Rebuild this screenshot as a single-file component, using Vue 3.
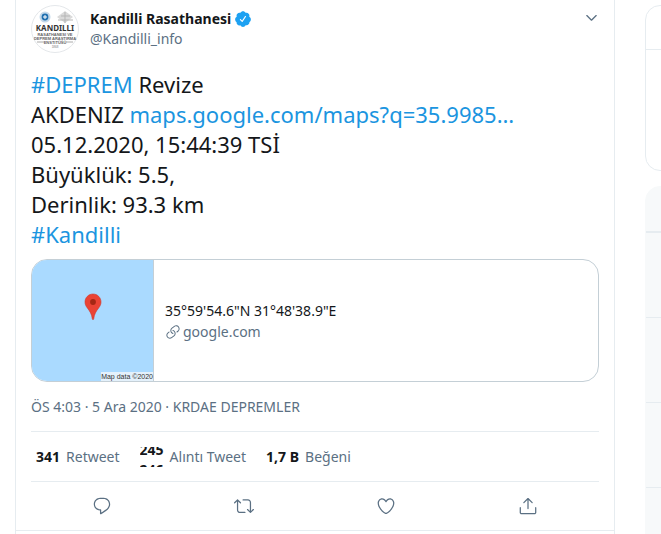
<script setup>
const lines = [
  [{ text: '#DEPREM', link: true }, { text: ' Revize' }],
  [{ text: 'AKDENIZ ' }, { text: 'maps.google.com/maps?q=35.9985…', link: true }],
  [{ text: '05.12.2020, 15:44:39 TSİ' }],
  [{ text: 'Büyüklük: 5.5,' }],
  [{ text: 'Derinlik: 93.3 km' }],
  [{ text: '#Kandilli', link: true }]
]

const actions = [
  {
    label: 'Yanıtla',
    paths: ['M14.046 2.242l-4.148-.01h-.002c-4.374 0-7.8 3.427-7.8 7.802 0 4.098 3.186 7.206 7.465 7.37v3.828c0 .108.044.286.12.403.142.225.384.347.632.347.138 0 .277-.038.402-.118.264-.168 6.473-4.14 8.088-5.506 1.902-1.61 3.04-3.97 3.043-6.312v-.017c-.006-4.367-3.43-7.787-7.8-7.788zm3.787 12.972c-1.134.96-4.862 3.405-6.772 4.643V16.67c0-.414-.335-.75-.75-.75h-.396c-3.66 0-6.318-2.476-6.318-5.886 0-3.534 2.768-6.302 6.3-6.302l4.147.01h.002c3.532 0 6.3 2.766 6.302 6.296-.003 1.91-.942 3.844-2.514 5.176z']
  },
  {
    label: 'Retweetle',
    paths: ['M23.77 15.67c-.292-.293-.767-.293-1.06 0l-2.22 2.22V7.65c0-2.068-1.683-3.75-3.75-3.75h-5.85c-.414 0-.75.336-.75.75s.336.75.75.75h5.85c1.24 0 2.25 1.01 2.25 2.25v10.24l-2.22-2.22c-.293-.293-.768-.293-1.06 0s-.294.768 0 1.06l3.5 3.5c.145.147.337.22.53.22s.383-.072.53-.22l3.5-3.5c.294-.292.294-.767 0-1.06zm-10.66 3.28H7.26c-1.24 0-2.25-1.01-2.25-2.25V6.46l2.22 2.22c.148.147.34.22.532.22s.384-.073.53-.22c.293-.293.293-.768 0-1.06l-3.5-3.5c-.293-.294-.768-.294-1.06 0l-3.5 3.5c-.294.292-.294.767 0 1.06s.767.293 1.06 0l2.22-2.22V16.7c0 2.068 1.683 3.75 3.75 3.75h5.85c.414 0 .75-.336.75-.75s-.337-.75-.75-.75z']
  },
  {
    label: 'Beğen',
    paths: ['M12 21.638h-.014C9.403 21.59 1.95 14.856 1.95 8.478c0-3.064 2.525-5.754 5.403-5.754 2.29 0 3.83 1.58 4.646 2.73.814-1.148 2.354-2.73 4.645-2.73 2.88 0 5.404 2.69 5.404 5.755 0 6.376-7.454 13.11-10.037 13.157H12zM7.354 4.225c-2.08 0-3.903 1.988-3.903 4.255 0 5.74 7.034 11.596 8.55 11.658 1.518-.062 8.55-5.917 8.55-11.658 0-2.267-1.823-4.255-3.903-4.255-2.528 0-3.94 2.936-3.952 2.965-.23.562-1.156.562-1.387 0-.014-.03-1.425-2.965-3.954-2.965z']
  },
  {
    label: 'Paylaş',
    paths: [
      'M17.53 7.47l-5-5c-.293-.293-.768-.293-1.06 0l-5 5c-.294.293-.294.768 0 1.06s.767.294 1.06 0l3.72-3.72V15c0 .414.336.75.75.75s.75-.336.75-.75V4.81l3.72 3.72c.146.147.338.22.53.22s.384-.072.53-.22c.293-.293.293-.767 0-1.06z',
      'M19.708 21.944H4.292C3.028 21.944 2 20.916 2 19.652V14c0-.414.336-.75.75-.75s.75.336.75.75v5.652c0 .437.355.792.792.792h15.416c.437 0 .792-.355.792-.792V14c0-.414.336-.75.75-.75s.75.336.75.75v5.652c0 1.264-1.028 2.292-2.292 2.292z'
    ]
  }
]
</script>

<template>
  <div class="page">
    <main class="column">
      <article class="tweet">
        <header class="author">
          <svg class="avatar" viewBox="0 0 48 48" role="img" aria-label="Kandilli Rasathanesi">
            <circle cx="24" cy="24" r="23.5" fill="#fff" stroke="#e4e7ea" />
            <circle cx="14" cy="12" r="5.500" fill="#c3d8ea" />
            <circle cx="14" cy="12" r="3.4" fill="#1f6fb0" />
            <path d="M14 10v4M12 12h4" stroke="#fff" stroke-width="1" />
            <path d="M34 6l8 6-8 6-8-6z" fill="#dadada" />
            <path d="M27 15h15M30 11h9M34 7v11" stroke="#b5b5b5" stroke-width="1" />
            <text class="logo-name" x="24" y="26" text-anchor="middle">KANDILLI</text>
            <text class="logo-small" x="24" y="31" text-anchor="middle">RASATHANESI VE</text>
            <text class="logo-small" x="24" y="35" text-anchor="middle">DEPREM ARAŞTIRMA</text>
            <text class="logo-small" x="24" y="39" text-anchor="middle">ENSTİTÜSÜ</text>
            <path d="M6 37h7M35 37h7" stroke="#aaa" stroke-width="1" />
            <text class="logo-year" x="24" y="43" text-anchor="middle">1868</text>
          </svg>
          <div class="names">
            <div class="name">
              <a href="#profile">Kandilli Rasathanesi</a>
              <svg class="verified" viewBox="0 0 24 24" role="img" aria-label="Onaylanmış hesap">
                <path d="M22.5 12.5c0-1.58-.875-2.95-2.148-3.6.154-.435.238-.905.238-1.4 0-2.21-1.71-3.998-3.818-3.998-.47 0-.92.084-1.336.25C14.818 2.415 13.51 1.5 12 1.5s-2.816.917-3.437 2.25c-.415-.165-.866-.25-1.336-.25-2.11 0-3.818 1.79-3.818 4 0 .494.083.964.237 1.4-1.272.65-2.147 2.018-2.147 3.6 0 1.495.782 2.798 1.942 3.486-.02.17-.032.34-.032.514 0 2.21 1.708 4 3.818 4 .47 0 .92-.086 1.335-.25.62 1.334 1.926 2.25 3.437 2.25 1.512 0 2.818-.916 3.437-2.25.415.163.865.248 1.336.248 2.11 0 3.818-1.79 3.818-4 0-.174-.012-.344-.033-.513 1.158-.687 1.943-1.99 1.943-3.484zm-6.616-3.334l-4.334 6.5c-.145.217-.382.334-.625.334-.143 0-.288-.04-.416-.126l-.115-.094-2.415-2.415c-.293-.293-.293-.768 0-1.06s.768-.294 1.06 0l1.77 1.767 3.825-5.74c.23-.345.696-.436 1.04-.207.346.23.44.696.21 1.04z" />
              </svg>
            </div>
            <div class="handle">@Kandilli_info</div>
          </div>
          <button class="caret" type="button" aria-label="Daha fazla">
            <svg viewBox="0 0 24 24">
              <path d="M20.207 8.147c-.39-.39-1.023-.39-1.414 0L12 14.94 5.207 8.147c-.39-.39-1.023-.39-1.414 0-.39.39-.39 1.023 0 1.414l7.5 7.5c.195.196.45.294.707.294s.512-.098.707-.293l7.5-7.5c.39-.39.39-1.022 0-1.413z" />
            </svg>
          </button>
        </header>

        <div class="body">
          <div v-for="(line, i) in lines" :key="i" class="line">
            <template v-for="part in line" :key="part.text">
              <a v-if="part.link" href="#link">{{ part.text }}</a>
              <span v-else>{{ part.text }}</span>
            </template>
          </div>
        </div>

        <a class="card" href="#map">
          <span class="map">
            <svg class="pin" viewBox="0 0 18 28">
              <path d="M9 1C4.600 1 1 4.500 1 9c0 2.500 1 4.200 2.500 6.200C5.800 18.300 7.800 21 8.300 26c.1.800 1.300.800 1.400 0 .5-5 2.500-7.700 4.800-10.800C16 13.200 17 11.500 17 9c0-4.500-3.600-8-8-8z" fill="#ea4335" stroke="#d0392d" stroke-width="0.600" />
              <circle cx="9" cy="9" r="2.900" fill="#a52714" />
            </svg>
            <span class="credit">Map data ©2020</span>
          </span>
          <span class="info">
            <span class="place">35°59'54.6"N 31°48'38.9"E</span>
            <span class="domain">
              <svg viewBox="0 0 24 24">
                <path d="M11.96 14.945c-.067 0-.136-.01-.203-.027-1.13-.318-2.097-.986-2.795-1.932-.832-1.125-1.176-2.508-.968-3.893s.942-2.605 2.068-3.438l3.53-2.608c2.322-1.716 5.61-1.224 7.33 1.1.83 1.127 1.175 2.51.967 3.895s-.943 2.605-2.07 3.438l-1.48 1.094c-.333.246-.804.175-1.05-.158-.246-.334-.176-.804.158-1.05l1.48-1.095c.803-.592 1.327-1.463 1.476-2.45.148-.988-.098-1.975-.69-2.778-1.225-1.656-3.572-2.01-5.23-.784l-3.53 2.608c-.802.593-1.326 1.464-1.475 2.45-.15.99.097 1.975.69 2.778.498.675 1.187 1.15 1.992 1.377.4.114.633.528.52.928-.092.33-.394.547-.722.547z" />
                <path d="M7.27 22.054c-1.61 0-3.197-.735-4.225-2.125-.832-1.127-1.176-2.51-.968-3.894s.943-2.605 2.07-3.438l1.478-1.094c.334-.245.805-.175 1.05.158s.177.804-.157 1.05l-1.48 1.095c-.803.593-1.326 1.464-1.475 2.45-.148.99.097 1.975.69 2.778 1.225 1.657 3.57 2.01 5.23.785l3.528-2.608c1.658-1.225 2.01-3.57.785-5.23-.498-.674-1.187-1.15-1.992-1.376-.4-.113-.633-.527-.52-.927.112-.4.528-.63.926-.522 1.13.318 2.096.986 2.794 1.932 1.717 2.324 1.224 5.612-1.1 7.33l-3.53 2.608c-.933.693-2.023 1.026-3.105 1.026z" />
              </svg>
              google.com
            </span>
          </span>
        </a>

        <div class="meta">ÖS 4:03 · 5 Ara 2020 · KRDAE DEPREMLER</div>

        <div class="stats">
          <a class="stat" href="#retweets"><b>341</b><span>Retweet</span></a>
          <a class="stat" href="#quotes">
            <b class="ticker"><span>245</span><span>246</span></b><span>Alıntı Tweet</span>
          </a>
          <a class="stat" href="#likes"><b>1,7 B</b><span>Beğeni</span></a>
        </div>

        <div class="actions">
          <button v-for="action in actions" :key="action.label" type="button" :aria-label="action.label">
            <svg viewBox="0 0 24 24">
              <path v-for="d in action.paths" :key="d" :d="d" />
            </svg>
          </button>
        </div>
      </article>
    </main>

    <aside class="sidebar">
      <section class="panel people"><div class="panel-head"></div></section>
      <section class="panel trends">
        <div class="panel-head"></div>
        <div v-for="n in 4" :key="n" class="trend"></div>
      </section>
    </aside>
  </div>
</template>

<style>
body {
  margin: 0;
  background: #fff;
}
</style>

<style scoped>
.page {
  display: flex;
  gap: 30px;
  height: 100vh;
  padding-left: 15px;
  overflow: hidden;
  color: #14171a;
  font-family: "Segoe UI", "Noto Sans", sans-serif;
  font-size: 14px;
  line-height: 20px;
}

.page * {
  box-sizing: border-box;
}

a {
  color: inherit;
  text-decoration: none;
}

svg {
  display: block;
  fill: currentColor;
}

button {
  display: flex;
  padding: 0;
  border: 0;
  background: none;
  color: #5b7083;
  cursor: pointer;
}

.column {
  flex: 1;
  min-width: 0;
  border: solid #e6ecf0;
  border-width: 0 1px;
}

.tweet {
  padding: 5px 15px 0;
  border-bottom: 1px solid #e6ecf0;
}

.author {
  display: flex;
  align-items: flex-start;
}

.avatar {
  width: 48px;
  height: 48px;
}

.logo-name {
  fill: #333;
  font: bold 8px "Noto Sans", sans-serif;
}

.logo-small {
  fill: #666;
  font: bold 4px "Liberation Sans", sans-serif;
}

.logo-year {
  fill: #777;
  font: 3px "Liberation Sans", sans-serif;
}

.names {
  flex: 1;
  padding: 4px 0 0 11px;
}

.name {
  display: flex;
  align-items: center;
  gap: 3px;
  font-weight: 700;
}

.verified {
  width: 18px;
  height: 18px;
  color: #1da1f2;
}

.handle,
.meta,
.domain,
.stat {
  color: #5b7083;
}

.caret {
  padding: 5px 0;
}

.caret svg {
  width: 15px;
  height: 15px;
}

.body {
  padding: 16px 0 10px;
  font-size: 22px;
  line-height: 30px;
}

.line {
  white-space: pre-wrap;
}

.line a {
  color: #1b95e0;
}

.card {
  display: flex;
  height: 123px;
  border: 1px solid #c4cfd6;
  border-radius: 16px;
  overflow: hidden;
}

.map {
  display: flex;
  flex-direction: column;
  align-items: center;
  justify-content: space-between;
  width: 122px;
  padding-top: 33px;
  border-right: 1px solid #c4cfd6;
  background: #aadaff;
}

.pin {
  width: 18px;
  height: 28px;
}

.credit {
  align-self: flex-end;
  background: #e4f1fb;
  color: #333;
  font: 7px/9px "Liberation Sans", sans-serif;
}

.info {
  display: flex;
  flex-direction: column;
  justify-content: center;
  gap: 1px;
  padding: 2px 0 0 11px;
}

.domain {
  display: flex;
  align-items: center;
  gap: 2px;
}

.domain svg {
  width: 16px;
  height: 16px;
}

.meta {
  padding: 15px 0 14px;
}

.stats {
  display: flex;
  gap: 20px;
  padding: 15px 5px 14px;
  border: solid #e6ecf0;
  border-width: 1px 0;
}

.stat {
  display: flex;
  gap: 6px;
}

.stat b {
  color: #14171a;
}

.ticker {
  display: flex;
  flex-direction: column;
  height: 20px;
  overflow: hidden;
}

/* The counter is caught halfway through rolling to its next value. */
.ticker span {
  transform: translateY(-7px);
}

.actions {
  display: flex;
  padding: 14px 0;
}

.actions button {
  flex: 1;
  justify-content: center;
}

.actions svg {
  width: 20px;
  height: 20px;
}

.sidebar {
  display: flex;
  flex-direction: column;
  gap: 15px;
  width: 16px;
  padding-top: 5px;
  overflow: hidden;
}

.panel {
  width: 350px;
  border-radius: 15px;
}

.panel-head {
  height: 44px;
  border-bottom: 1px solid #e6ecf0;
}

.people {
  height: 166px;
  flex-shrink: 0;
  border: 1px solid #e6ecf0;
}

.trends {
  border: 1px solid #f7f9fa;
  background: #f7f9fa;
}

.trends .panel-head {
  height: 46px;
  border-bottom-width: 2px;
}

.trend {
  height: 85px;
  border-bottom: 1px solid #e6ecf0;
}
</style>
